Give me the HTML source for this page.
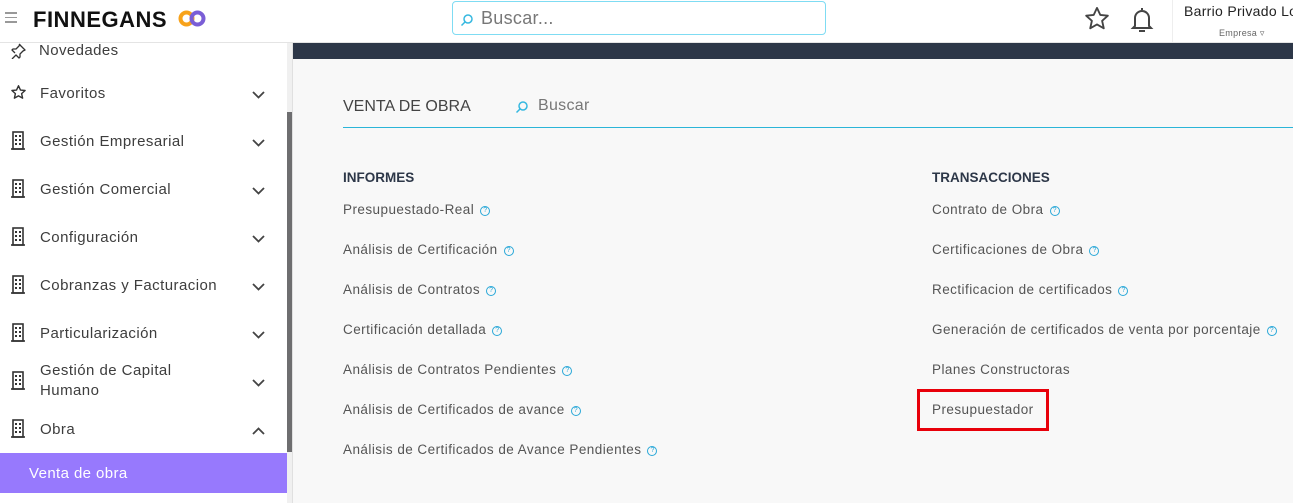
<!DOCTYPE html>
<html><head><meta charset="utf-8"><style>
*{margin:0;padding:0;box-sizing:border-box}
body{width:1293px;height:503px;overflow:hidden;background:#f8f8f8;font-family:"Liberation Sans",sans-serif;position:relative;color:#444}
.hdr{position:absolute;left:0;top:0;width:1293px;height:43px;background:#fff;border-bottom:1px solid #e4e4e4}
.side{position:absolute;left:0;top:43px;width:287px;height:460px;background:#fff}
.sb{position:absolute;left:287px;top:43px;width:6px;height:460px;background:#f0f0f0;border-right:1px solid #e0e0e0}
.thumb{position:absolute;left:287px;top:112px;width:5px;height:340px;background:#6e6e70}
.bar{position:absolute;left:293px;top:43px;width:1000px;height:16px;background:#2d3748}
.t2{position:absolute;font-size:13.5px;color:#555;letter-spacing:0.45px}
.q{display:inline-block;width:10px;height:10px;border:1px solid #2aa8d8;border-radius:50%;font-size:7px;line-height:8px;text-align:center;color:#2aa8d8;margin-left:6px;vertical-align:2px;letter-spacing:0}
</style></head><body>
<div class="hdr">
 <div style="position:absolute;left:5px;top:12px;width:12px">
  <div style="height:1.5px;background:#999;margin-bottom:3px"></div><div style="height:1.5px;background:#999;margin-bottom:3px"></div><div style="height:1.5px;background:#999"></div></div>
 <div style="position:absolute;left:33px;top:7px;font-size:22px;font-weight:bold;color:#111;letter-spacing:0.5px">FINNEGANS</div>
 <svg style="position:absolute;left:178px;top:10px" width="28" height="17" viewBox="0 0 28 17"><circle cx="8.5" cy="8.5" r="6" fill="none" stroke="#f7a21b" stroke-width="4"/><circle cx="19.5" cy="8.5" r="6" fill="none" stroke="#7a5ed6" stroke-width="4"/></svg>
 <div style="position:absolute;left:452px;top:1px;width:374px;height:34px;border:1px solid #7fdcf3;border-radius:4px;background:#fff">
  <svg style="position:absolute;left:7px;top:11px" width="14" height="14" viewBox="0 0 14 14"><circle cx="8" cy="6" r="4" fill="none" stroke="#35b8e0" stroke-width="1.5"/><line x1="5" y1="9" x2="1.5" y2="12.5" stroke="#35b8e0" stroke-width="1.5"/></svg>
  <span style="position:absolute;left:28px;top:6px;font-size:18px;color:#777;letter-spacing:0.3px">Buscar...</span></div>
 <svg style="position:absolute;left:1083px;top:5px" width="28" height="28" viewBox="0 0 24 24"><path d="M12 2.5l2.8 6 6.5.7-4.9 4.4 1.4 6.4L12 16.7 6.2 20l1.4-6.4L2.7 9.2l6.5-.7z" fill="none" stroke="#444" stroke-width="1.6" stroke-linejoin="round"/></svg>
 <svg style="position:absolute;left:1129px;top:5px" width="26" height="30" viewBox="0 0 26 30"><path d="M13 3v2M6 21V13a7 7 0 0 1 14 0v8l2 2H4z" fill="none" stroke="#444" stroke-width="2"/><path d="M10 26h6" stroke="#444" stroke-width="2"/></svg>
 <div style="position:absolute;left:1172px;top:0;width:1px;height:42px;background:#eee"></div>
 <div style="position:absolute;left:1184px;top:3px;font-size:14px;color:#222;white-space:nowrap;letter-spacing:0.3px">Barrio Privado Lo</div>
 <div style="position:absolute;left:1219px;top:28px;font-size:9px;color:#666;letter-spacing:0.3px">Empresa ▿</div>
</div>
<div class="side">
 <svg style="position:absolute;left:10px;top:0px" width="16" height="16" viewBox="0 0 16 16"><path d="M9 1l6 6-2 1-3 3 0 3-1 1-3-3-4 4M5 10L2 7l1-1h3l3-3 1-2" fill="none" stroke="#333" stroke-width="1.3" stroke-linejoin="round"/></svg>
 <div style="position:absolute;left:39px;top:-1px;font-size:15px;color:#3d3d3d;letter-spacing:0.4px">Novedades</div>
</div>
<div class="bar"></div>
<div class="sb"></div><div class="thumb"></div>
<div id="menu"></div>
<div style="position:absolute;left:0;top:453px;width:287px;height:40px;background:#9779fd"><span style="position:absolute;left:29px;top:12px;font-size:15px;color:#fff;letter-spacing:0.4px">Venta de obra</span></div>

<div style="position:absolute;left:343px;top:98px;font-size:16px;color:#444">VENTA DE OBRA</div>
<svg style="position:absolute;left:515px;top:100px" width="14" height="14" viewBox="0 0 14 14"><circle cx="8" cy="6" r="4" fill="none" stroke="#35b8e0" stroke-width="1.5"/><line x1="5" y1="9" x2="1.5" y2="12.5" stroke="#35b8e0" stroke-width="1.5"/></svg>
<div style="position:absolute;left:538px;top:97px;font-size:16px;color:#777;letter-spacing:0.3px">Buscar</div>
<div style="position:absolute;left:343px;top:127px;width:950px;height:1px;background:#2bb5d8"></div>
<div style="position:absolute;left:343px;top:170px;font-size:13.5px;font-weight:bold;color:#2d3748">INFORMES</div>
<div style="position:absolute;left:932px;top:170px;font-size:13.5px;font-weight:bold;color:#2d3748">TRANSACCIONES</div>
<div class="t2" style="left:343px;top:202px">Presupuestado-Real<span class="q">?</span></div>
<div class="t2" style="left:343px;top:242px">Análisis de Certificación<span class="q">?</span></div>
<div class="t2" style="left:343px;top:282px">Análisis de Contratos<span class="q">?</span></div>
<div class="t2" style="left:343px;top:322px">Certificación detallada<span class="q">?</span></div>
<div class="t2" style="left:343px;top:362px">Análisis de Contratos Pendientes<span class="q">?</span></div>
<div class="t2" style="left:343px;top:402px">Análisis de Certificados de avance<span class="q">?</span></div>
<div class="t2" style="left:343px;top:442px">Análisis de Certificados de Avance Pendientes<span class="q">?</span></div>
<div class="t2" style="left:932px;top:202px">Contrato de Obra<span class="q">?</span></div>
<div class="t2" style="left:932px;top:242px">Certificaciones de Obra<span class="q">?</span></div>
<div class="t2" style="left:932px;top:282px">Rectificacion de certificados<span class="q">?</span></div>
<div class="t2" style="left:932px;top:322px">Generación de certificados de venta por porcentaje<span class="q">?</span></div>
<div class="t2" style="left:932px;top:362px">Planes Constructoras</div>
<div class="t2" style="left:932px;top:402px">Presupuestador</div>
<div style="position:absolute;left:917px;top:389px;width:132px;height:42px;border:3px solid #e8000a"></div>
<script>
var items=[["Favoritos",92,"star"],["Gestión Empresarial",140],["Gestión Comercial",188],["Configuración",236],["Cobranzas y Facturacion",284],["Particularización",332],["Gestión de Capital<br>Humano",380],["Obra",428,"b","up"]];
var h="";
items.forEach(function(i){
 var y=i[1];
 var ic=i[2]=="star"?'<svg style="position:absolute;left:10px;top:'+(y-8)+'px" width="17" height="17" viewBox="0 0 24 24"><path d="M12 2.5l2.8 6 6.5.7-4.9 4.4 1.4 6.4L12 16.7 6.2 20l1.4-6.4L2.7 9.2l6.5-.7z" fill="none" stroke="#333" stroke-width="2" stroke-linejoin="round"/></svg>'
 :'<svg style="position:absolute;left:11px;top:'+(y-9)+'px" width="14" height="19" viewBox="0 0 14 19"><rect x="2" y="1" width="10" height="17" fill="none" stroke="#333" stroke-width="1.6"/><path d="M0 18h14" stroke="#333" stroke-width="1.6"/><g fill="#333"><rect x="4" y="4" width="2" height="2"/><rect x="8" y="4" width="2" height="2"/><rect x="4" y="8" width="2" height="2"/><rect x="8" y="8" width="2" height="2"/><rect x="4" y="12" width="2" height="2"/><rect x="8" y="12" width="2" height="2"/></g></svg>';
 var two=i[0].indexOf("<br>")>0;
 h+=ic+'<div style="position:absolute;left:40px;top:'+(two?y-19:y-8)+'px;font-size:15px;line-height:20px;color:#3d3d3d;letter-spacing:0.45px">'+i[0]+'</div>';
 h+='<svg style="position:absolute;left:252px;top:'+(y-1)+'px" width="13" height="8" viewBox="0 0 13 8"><path d="'+(i[3]?'M1 7L6.5 1.5 12 7':'M1 1l5.5 5.5L12 1')+'" fill="none" stroke="#444" stroke-width="1.8"/></svg>';
});
document.getElementById("menu").innerHTML=h;
</script>
</body></html>
